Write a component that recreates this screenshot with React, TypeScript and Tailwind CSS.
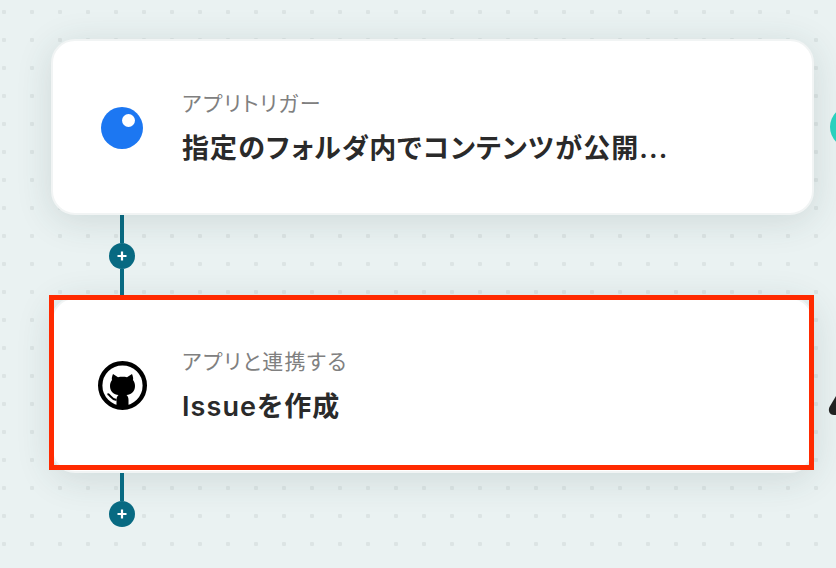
const font = { fontFamily: '"Inter", "Noto Sans CJK JP", sans-serif' };

function Plus() {
  return (
    <div className="flex h-[26px] w-[26px] items-center justify-center rounded-full bg-[#086a82]">
      <svg width="12" height="12" viewBox="0 0 12 12">
        <path d="M6 1.5v9M1.5 6h9" stroke="#fff" strokeWidth="2.2" />
      </svg>
    </div>
  );
}

function GithubMark() {
  return (
    <svg width="49" height="49" viewBox="0 0 49 49">
      <circle cx="24.5" cy="24.5" r="22.3" fill="#fff" stroke="#000" strokeWidth="4.4" />
      <path
        d="M15 13L20 16.3C22.5 15.7 26.5 15.7 29 16.3L34 13C35 15.5 35.5 17.5 35 19C36.5 21 37 23 37 25C37 31 33 33.5 28.5 34C30 35 30.5 37 30.5 39V46H18.5V39C18.5 37 19 35 20.5 34C16 33.5 12 31 12 25C12 23 12.5 21 14 19C13.5 17.5 14 15.5 15 13Z"
        fill="#000"
      />
      <path d="M9.5 33C12.5 33.5 13 38.5 18.5 39" fill="none" stroke="#000" strokeWidth="2" />
    </svg>
  );
}

function Card({ icon, label, title }: { icon: React.ReactNode; label: string; title: string }) {
  return (
    <div className="flex h-[176px] w-[763px] items-center rounded-[24px] border-2 border-[#f1f4f4] bg-white shadow-[0_6px_36px_rgba(40,70,70,0.14)]">
      <div className="ml-[44px] mr-[35px] flex w-[50px] shrink-0 justify-center">{icon}</div>
      <div className="flex flex-col pt-[5px] [font-feature-settings:'palt']">
        <div className="text-[21px] font-normal leading-[24px] tracking-[1.4px] text-[#808080]">{label}</div>
        <div className="mt-[15px] text-[27px] font-semibold leading-[36px] tracking-[1.1px] text-[#2a2a2a]">{title}</div>
      </div>
    </div>
  );
}

export default function App() {
  return (
    <div
      style={font}
      className="relative h-[568px] w-[836px] overflow-hidden bg-[#eaf2f2] bg-[radial-gradient(circle,#dce4e4_2px,transparent_2.5px)] bg-[length:28px_28px] bg-[position:-10px_-2px] pl-[51px] pt-[39px]"
    >
      <div className="relative z-10">
        <Card
          label="アプリトリガー"
          title="指定のフォルダ内でコンテンツが公開..."
          icon={
            <div className="relative mt-[2px] h-[42px] w-[42px] rounded-full bg-[#1c77f2]">
              <div className="absolute left-[21px] top-[7px] h-[13px] w-[13px] rounded-full bg-white" />
            </div>
          }
        />
      </div>
      <div className="flex h-[82px] w-[142px] flex-col items-center">
        <div className="h-[28px] w-[4px] bg-[#086a82]" />
        <Plus />
        <div className="h-[28px] w-[4px] bg-[#086a82]" />
      </div>
      <Card label="アプリと連携する" title="Issueを作成" icon={<GithubMark />} />
      <div className="flex w-[142px] flex-col items-center">
        <div className="h-[28px] w-[4px] bg-[#086a82]" />
        <Plus />
      </div>

      <div className="absolute left-[48.5px] top-[294.5px] h-[175.5px] w-[765px] border-[5px] border-[#ff2a00]" />
      <div className="absolute left-[830px] top-[106px] h-[42px] w-[42px] rounded-full bg-[#2bd4c0]" />
      <svg className="absolute left-[826px] top-[390px]" width="10" height="28" viewBox="0 0 10 28">
        <path d="M10 6L3.5 17C2 20 3 25 8 25H10Z" fill="#222" />
      </svg>
    </div>
  );
}
